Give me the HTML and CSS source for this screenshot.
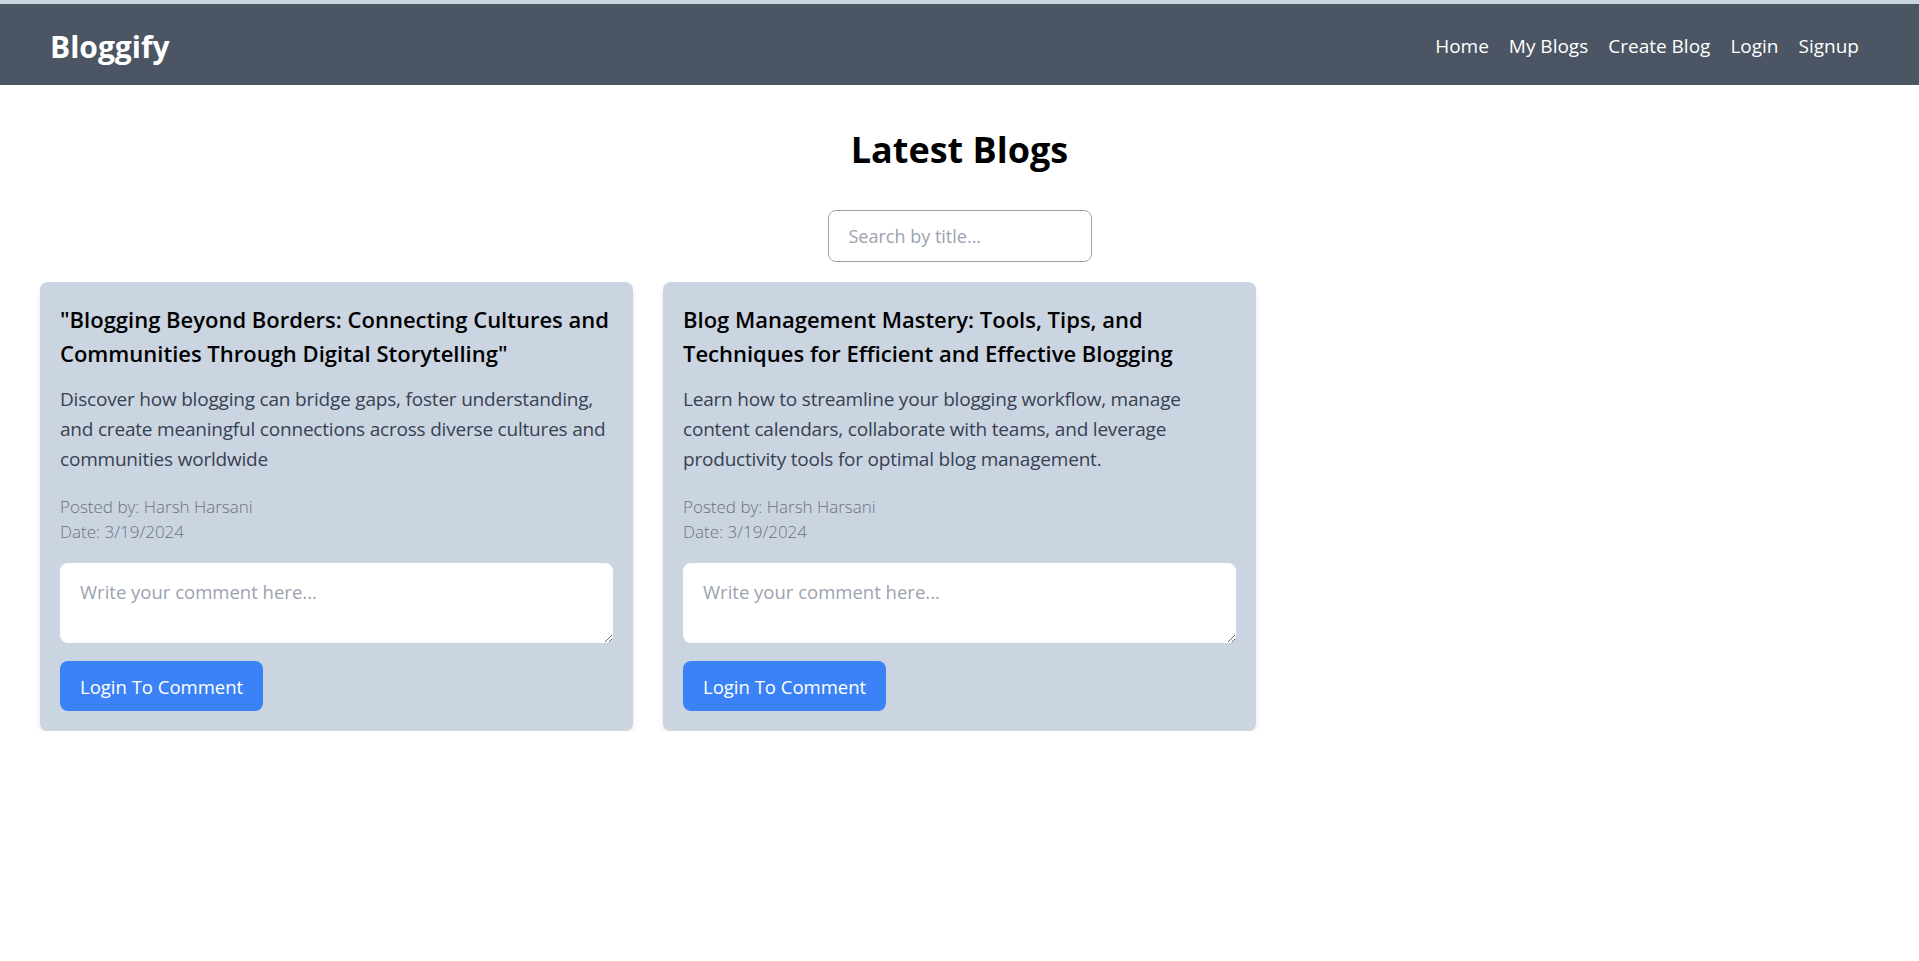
FILE: index.html
```html
<!DOCTYPE html>
<html lang="en">
<head>
<meta charset="utf-8">
<title>Bloggify</title>
<link rel="stylesheet" href="styles.css">
</head>
<body>
<div class="topstrip"></div>
<nav class="navbar">
  <a class="logo" href="#">Bloggify</a>
  <ul class="navlinks">
    <li><a href="#">Home</a></li>
    <li><a href="#">My Blogs</a></li>
    <li><a href="#">Create Blog</a></li>
    <li><a href="#">Login</a></li>
    <li><a href="#">Signup</a></li>
  </ul>
</nav>
<main class="main">
  <h1 class="page-title">Latest Blogs</h1>
  <div class="search-wrap">
    <input class="search" type="text" placeholder="Search by title...">
  </div>
  <div class="grid">
    <article class="card">
      <h2 class="card-title">"Blogging Beyond Borders: Connecting Cultures and Communities Through Digital Storytelling"</h2>
      <p class="card-desc">Discover how blogging can bridge gaps, foster understanding, and create meaningful connections across diverse cultures and communities worldwide</p>
      <div class="meta">
        <p>Posted by: Harsh Harsani</p>
        <p>Date: 3/19/2024</p>
      </div>
      <textarea class="comment" placeholder="Write your comment here..."></textarea>
      <button class="btn">Login To Comment</button>
    </article>
    <article class="card">
      <h2 class="card-title">Blog Management Mastery: Tools, Tips, and Techniques for Efficient and Effective Blogging</h2>
      <p class="card-desc">Learn how to streamline your blogging workflow, manage content calendars, collaborate with teams, and leverage productivity tools for optimal blog management.</p>
      <div class="meta">
        <p>Posted by: Harsh Harsani</p>
        <p>Date: 3/19/2024</p>
      </div>
      <textarea class="comment" placeholder="Write your comment here..."></textarea>
      <button class="btn">Login To Comment</button>
    </article>
  </div>
</main>
</body>
</html>
```

FILE: styles.css
```css
* { box-sizing: border-box; }
html, body { margin: 0; padding: 0; }
body {
  font-family: "Open Sans", "Noto Sans", "DejaVu Sans", sans-serif;
  background: #ffffff;
  color: #000;
}
.topstrip {
  height: 4px;
  background: #c9d6df;
}
.navbar {
  height: 81px;
  background: #4b5563;
  display: flex;
  align-items: center;
  justify-content: space-between;
  padding: 3px 60px 0 50px;
}
.logo {
  color: #fff;
  font-weight: 700;
  font-size: 30px;
  text-decoration: none;
}
.navlinks {
  list-style: none;
  display: flex;
  gap: 20px;
  margin: 0;
  padding: 0;
}
.navlinks a {
  color: #fff;
  text-decoration: none;
  font-size: 19px;
}
.main {
  padding: 0 40px;
}
.page-title {
  text-align: center;
  font-size: 36px;
  font-weight: 700;
  line-height: 44px;
  margin: 43px 0 0;
}
.search-wrap {
  display: flex;
  justify-content: center;
  margin-top: 38px;
}
.search {
  width: 264px;
  height: 52px;
  border: 1px solid #9ca3af;
  border-radius: 8px;
  padding: 0 20px;
  font-family: inherit;
  font-size: 18px;
  color: #111;
  outline: none;
}
.search::placeholder { color: #9ca3af; }
.grid {
  display: grid;
  grid-template-columns: repeat(3, 1fr);
  gap: 30px;
  margin-top: 20px;
  align-items: start;
}
.card {
  background: #cbd5e1;
  border-radius: 8px;
  padding: 20px;
  box-shadow: 0 4px 6px -1px rgba(0,0,0,0.1), 0 2px 4px -2px rgba(0,0,0,0.1);
  display: flex;
  flex-direction: column;
  align-items: flex-start;
}
.card-title {
  margin: 0;
  font-size: 22px;
  line-height: 34px;
  font-weight: 600;
  color: #000;
}
.card-desc {
  margin: 14px 0 0;
  font-size: 19px;
  letter-spacing: -0.2px;
  line-height: 30px;
  color: #374151;
}
.meta {
  margin-top: 20px;
  color: #6b7280;
  font-size: 17px;
  font-weight: 300;
  line-height: 25px;
}
.meta p { margin: 0; }
.comment {
  margin-top: 19px;
  width: 100%;
  height: 80px;
  border: none;
  border-radius: 8px;
  background: #fff;
  padding: 16px 20px;
  font-family: inherit;
  font-size: 18.5px;
  resize: vertical;
}
.comment::placeholder { color: #9ca3af; }
.btn {
  margin-top: 18px;
  height: 50px;
  padding: 0 20px;
  background: #3b82f6;
  color: #fff;
  border: none;
  border-radius: 8px;
  font-family: inherit;
  font-size: 18.5px;
  cursor: pointer;
}
```
